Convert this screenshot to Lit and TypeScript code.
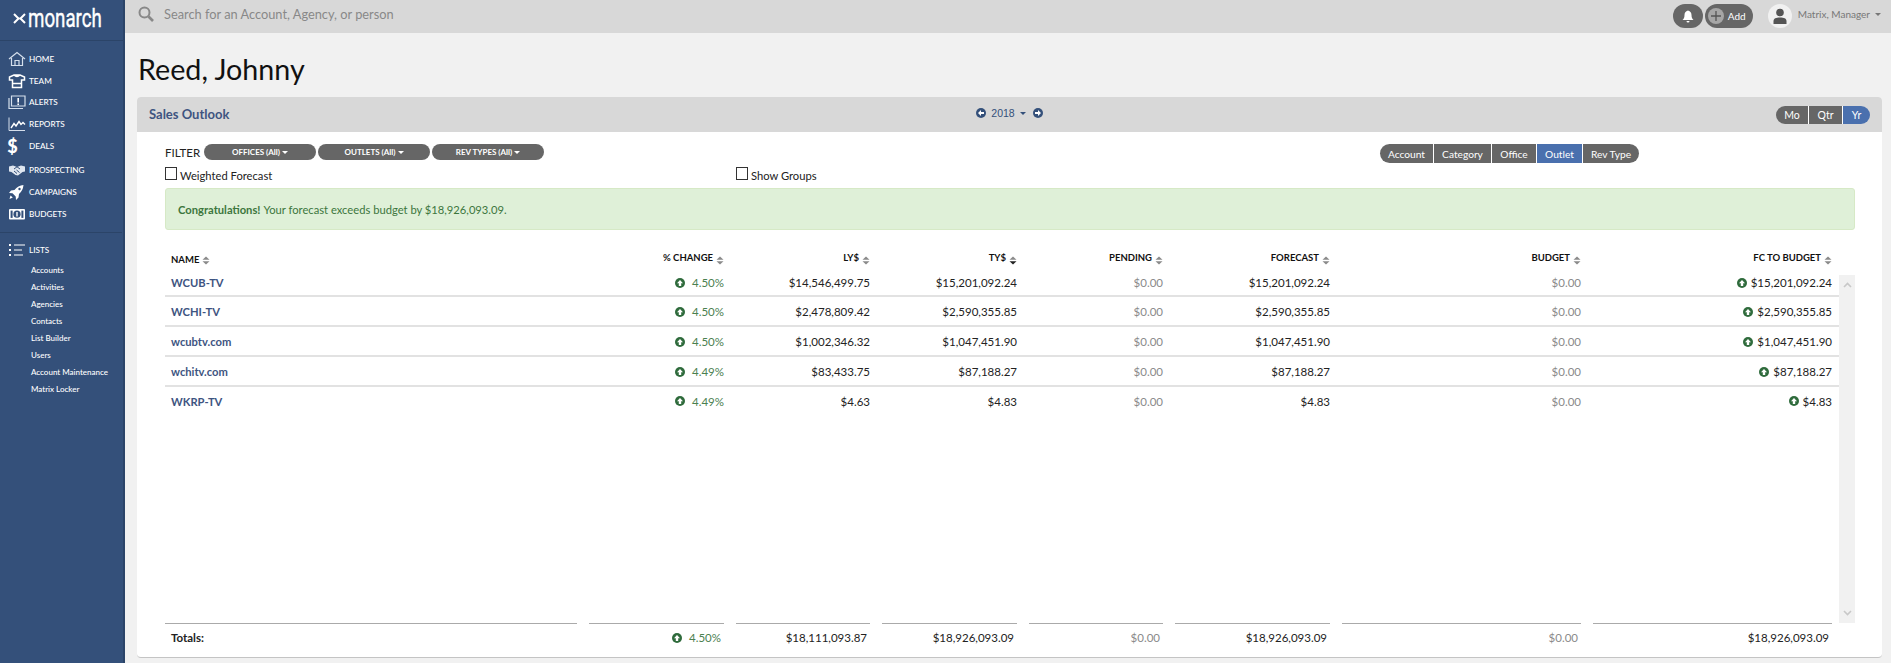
import { LitElement, html, css, svg } from "lit";
import { customElement } from "lit/decorators.js";

const ico = (c: unknown, w = 18, h = 16, vb = "0 0 18 16") =>
  html`<svg class="ico" width=${w} height=${h} viewBox=${vb}>${c}</svg>`;

const icons: Record<string, unknown> = {
  home: ico(svg`<path d="M1 8 L9 1.5 L17 8 M3.5 7 V14.5 H14.5 V7 M7 14.5 V9.5 H11 V14.5" fill="none" stroke="#d5dfec" stroke-width="1.2"/>`),
  team: ico(svg`<path d="M6 2 H12 L16.5 4 V7 H13.5 V14.5 H4.5 V7 H1.5 V4 Z M6 2 Q9 5 12 2 M4.5 10.5 H13.5" fill="none" stroke="#fff" stroke-width="1.5"/>`),
  alerts: ico(svg`<path d="M3.5 2 H17 V12 H3.5 Z" fill="none" stroke="#d5dfec" stroke-width="1.2"/><path d="M1 4 V14.5 H15" fill="none" stroke="#d5dfec" stroke-width="1.2"/><path d="M10.2 4 V8.5 M10.2 9.6 V11" stroke="#fff" stroke-width="1.6"/>`),
  reports: ico(svg`<path d="M1 1.5 V14.5 H17" fill="none" stroke="#d5dfec" stroke-width="1"/><path d="M3 12 L6 7.5 L8 10 L11 5.5 L13 8.5 L15 6.5 L17 8.5" fill="none" stroke="#fff" stroke-width="1.4"/>`),
  prospecting: ico(svg`<path d="M1 4.5 L5 3.5 L9 5 L13 3.5 L17 4.5 V9.5 L14.5 10 L10 13.5 L7.5 13 L3.5 10 L1 9.5 Z" fill="#dfe6f0"/><path d="M6 7 L9 4.8 L12 7 M6 9 L9 11.5 M8.5 8 L11.5 10.5" fill="none" stroke="#34507a" stroke-width="1"/>`),
  campaigns: ico(svg`<path d="M15.5 1 Q10 1.5 6.5 6 L3 6.5 L1 9 L4.5 9.3 L7.7 12.5 L8 16 L10.5 13.5 L11 10 Q15 6.5 15.5 1 Z M2.5 11.5 L4.8 13.6 L1.5 15 Z" fill="#fff"/><circle cx="11.5" cy="5" r="1.2" fill="#34507a"/>`),
  budgets: ico(svg`<rect x="1" y="3" width="16" height="10.5" rx="1" fill="#fff"/><circle cx="9" cy="8.2" r="3.6" fill="#34507a"/><path d="M9 6 V10.5" stroke="#fff" stroke-width="1.4"/><rect x="2.6" y="4.6" width="2" height="7.3" fill="#34507a"/><rect x="13.4" y="4.6" width="2" height="7.3" fill="#34507a"/>`),
  lists: ico(svg`<path d="M1 3 H3 M1 8 H3 M1 13 H3" stroke="#fff" stroke-width="2"/><path d="M6 3 H17 M6 8 H14 M6 13 H15" stroke="#fff" stroke-width="1.1"/>`),
};

const nav = [
  { k: "home", t: "HOME" },
  { k: "team", t: "TEAM" },
  { k: "alerts", t: "ALERTS" },
  { k: "reports", t: "REPORTS" },
  { k: "deals", t: "DEALS", cls: "deals" },
  { k: "prospecting", t: "PROSPECTING" },
  { k: "campaigns", t: "CAMPAIGNS" },
  { k: "budgets", t: "BUDGETS" },
];
const subs = ["Accounts", "Activities", "Agencies", "Contacts", "List Builder", "Users", "Account Maintenance", "Matrix Locker"];

const heads = ["% CHANGE", "LY$", "TY$", "PENDING", "FORECAST", "BUDGET", "FC TO BUDGET"];
const rows = [
  ["WCUB-TV", "4.50%", "$14,546,499.75", "$15,201,092.24", "$15,201,092.24", "$15,201,092.24"],
  ["WCHI-TV", "4.50%", "$2,478,809.42", "$2,590,355.85", "$2,590,355.85", "$2,590,355.85"],
  ["wcubtv.com", "4.50%", "$1,002,346.32", "$1,047,451.90", "$1,047,451.90", "$1,047,451.90"],
  ["wchitv.com", "4.49%", "$83,433.75", "$87,188.27", "$87,188.27", "$87,188.27"],
  ["WKRP-TV", "4.49%", "$4.63", "$4.83", "$4.83", "$4.83"],
];

const up = html`<svg class="up" width="10" height="10" viewBox="0 0 10 10"><circle cx="5" cy="5" r="5" fill="#2f6b3c"/><path d="M5 2 L8 5.2 H6.2 V8 H3.8 V5.2 H2 Z" fill="#fff"/></svg>`;
const sort = (active = false) => html`<svg class="sort" width="8" height="9" viewBox="0 0 8 9"><path d="M4 0.5 L7.5 3.8 H0.5 Z" fill="#8a8a8a"/><path d="M4 8.5 L7.5 5.2 H0.5 Z" fill=${active ? "#222" : "#8a8a8a"}/></svg>`;
const circ = (dir: "l" | "r") => html`<svg width="10" height="10" viewBox="0 0 10 10"><circle cx="5" cy="5" r="5" fill="#34507a"/><path d=${dir === "l" ? "M2 5 L5 2 V4 H8 V6 H5 V8 Z" : "M8 5 L5 2 V4 H2 V6 H5 V8 Z"} fill="#fff"/></svg>`;

@customElement("app-root")
export class AppRoot extends LitElement {
  static styles = css`
    :host { display: flex; height: 663px; overflow: hidden; background: #f1f1f1; font-family: Lato, "Open Sans", sans-serif; color: #222; }
    * { box-sizing: border-box; }
    .side { width: 125px; flex: none; background: #34507a; border-right: 2px solid #2b4468; color: #fff; }
    .logo { height: 41px; border-bottom: 1px solid #2b4468; display: flex; align-items: center; padding: 0 0 4px 13px; gap: 2px; }
    .logo svg { flex: none; }
    .logo-text { display: block; flex: none; width: 73px; font-family: Roboto, sans-serif; font-size: 26px; font-weight: 400; line-height: 1; -webkit-text-stroke: 0.4px #fff; transform: scaleX(0.72); transform-origin: left center; white-space: nowrap; }
    .nav { padding-top: 7px; height: 192px; border-bottom: 1px solid #2b4468; margin-right: 1px; }
    .item { height: 21.7px; display: flex; align-items: center; font-size: 8.2px; font-weight: 500; padding-left: 4px; }
    .item .i { width: 25px; flex: none; display: flex; justify-content: center; }
    .item.deals { margin-bottom: 3px; }
    .dollar { font-size: 18px; font-weight: 900; line-height: 1; margin-left: -8px; }
    .lists { padding-top: 6.5px; }
    .sub { height: 17.1px; display: flex; align-items: center; font-size: 8px; font-weight: 500; padding-left: 31px; }
    .ico { display: block; }
    .main { flex: 1; min-width: 0; display: flex; flex-direction: column; }
    .top { height: 33px; flex: none; background: #d8d8d8; display: flex; align-items: center; padding: 0 0 5px 13px; }
    .search { font-size: 12.8px; color: #888; margin-left: 10px; flex: 1; }
    .pill-bell { width: 30px; height: 24px; border-radius: 12px; background: #666; display: flex; align-items: center; justify-content: center; }
    .pill-add { width: 48px; height: 24px; margin-left: 2px; border-radius: 12px; background: #666; display: flex; align-items: center; gap: 4px; padding-left: 3px; color: #fff; font-size: 10px; }
    .top-right { display: flex; align-items: center; margin-right: 10px; position: relative; top: 2px; }
    .avatar { width: 24px; height: 24px; border-radius: 50%; background: #f1f1f1; margin-left: 15px; display: flex; align-items: center; justify-content: center; overflow: hidden; }
    .user { font-size: 10px; color: #777; margin-left: 6px; display: flex; align-items: center; gap: 5px; position: relative; top: -2px; }
    .caret { display: inline-block; width: 0; height: 0; border-left: 3px solid transparent; border-right: 3px solid transparent; border-top: 3px solid currentColor; vertical-align: middle; }
    h1 { margin: 0; height: 64px; flex: none; padding: 15px 0 0 13px; font-size: 28.7px; font-weight: 400; line-height: 42px; color: #111; }
    .card { margin: 0 9px 0 12px; height: 561px; background: #fff; border-bottom: 1px solid #c4c4c4; border-radius: 4px; display: flex; flex-direction: column; }
    .card-head { height: 35px; flex: none; background: #d8d8d8; border-radius: 4px 4px 0 0; display: grid; grid-template-columns: 1fr auto 1fr; align-items: center; padding: 0 12px; }
    .card-title { font-size: 13px; font-weight: 700; color: #3e5481; position: relative; top: -1px; }
    .year { display: flex; align-items: center; color: #34507a; font-size: 10.5px; font-family: "Liberation Sans", sans-serif; gap: 5px; margin-bottom: 3px; }
    .year .caret { margin-right: 2px; }
    .seg { display: flex; justify-content: flex-end; }
    .seg button { all: unset; box-sizing: border-box; background: #666; color: #fff; display: flex; align-items: center; justify-content: center; border-right: 1px solid #fff; font-family: Lato, sans-serif; }
    .seg button:last-child { border-right: none; border-radius: 0 10px 10px 0; }
    .seg button:first-child { border-radius: 10px 0 0 10px; }
    .seg button.on { background: #4a70ae; }
    .period button { height: 18px; font-size: 10.5px; }
    .seg .p1 { width: 33px; } .seg .p2 { width: 34px; } .seg .p3 { width: 27px; }
    .body { flex: 1; min-height: 0; padding: 12px 27px 0 28px; display: flex; flex-direction: column; }
    .controls { display: flex; justify-content: space-between; height: 20px; }
    .filters { display: flex; align-items: center; height: 16px; }
    .flabel { font-size: 11.5px; color: #222; width: 39px; }
    .fbtn { width: 112px; height: 16px; margin-right: 2px; border-radius: 8px; background: #666; color: #fff; font-size: 8px; font-weight: 700; display: flex; align-items: center; justify-content: center; gap: 2px; }
    .views { margin-right: 216px; }
    .views button { height: 19px; font-size: 10.2px; }
    .seg .v1 { width: 54px; } .seg .v2 { width: 58px; } .seg .v3 { width: 45px; } .seg .v4 { width: 46px; } .seg .v5 { width: 56px; }
    .checks { display: flex; height: 24px; padding-top: 3px; }
    .chk { display: flex; align-items: flex-start; font-size: 11.2px; line-height: 18px; color: #222; width: 571px; gap: 3px; }
    .chk i { width: 12px; height: 13px; border: 1px solid #333; flex: none; }
    .alert { height: 42px; flex: none; background: #dff0d8; border: 1px solid #d6e9c6; border-radius: 3px; color: #3c763d; font-size: 11.2px; display: flex; align-items: center; padding-left: 12px; }
    .alert b { margin-right: 3px; }
    .grid { display: grid; grid-template-columns: 412px 135px 134px 135px 134px 155px 239px 239px; column-gap: 12px; }
    .thead { height: 45px; align-items: end; padding-bottom: 10px; flex: none; }
    .th { font-size: 9.5px; font-weight: 700; color: #111; display: flex; justify-content: flex-end; align-items: flex-end; gap: 3px; line-height: 14px; }
    .th.name { justify-content: flex-start; padding-left: 6px; }
    .th.name span { position: relative; top: 2px; }
    .sort { display: block; }
    .scroll-wrap { flex: 1; min-height: 0; display: flex; }
    .tbody { flex: 1; min-width: 0; }
    .row { height: 30px; border-bottom: 2px solid #e2e2e2; align-items: center; padding-top: 1px; font-size: 11.5px; color: #222; }
    .row:first-child { height: 22px; padding: 0 0 5px; }
    .row:last-child { border-bottom: none; padding-bottom: 3px; }
    .name-cell { font-weight: 700; color: #3e5481; padding-left: 6px; font-size: 11.2px; }
    .num { display: flex; justify-content: flex-end; align-items: center; gap: 4px; }
    .muted { color: #8a8a8a; }
    .green { color: #4a8050; }
    .bar { width: 16px; flex: none; background: #f1f1f1; display: flex; flex-direction: column; justify-content: space-between; align-items: center; padding: 7px 0; }
    .tfoot { height: 34px; flex: none; }
    .tf { border-top: 1px solid #aaa; height: 28px; font-size: 11.5px; display: flex; align-items: center; padding: 0 3px; justify-content: flex-end; gap: 4px; }
    .tf.total { justify-content: flex-start; font-weight: 700; padding-left: 6px; }
  `;

  render() {
    return html`
      <aside class="side">
        <div class="logo">
          <svg width="13" height="11" viewBox="0 0 13 11"><path d="M1 1 L5.5 5.5 L1 10 M12 1 L7.5 5.5 L12 10" fill="none" stroke="#fff" stroke-width="2"/><path d="M5 5.5 H8" stroke="#fff" stroke-width="1.6"/></svg>
          <span class="logo-text">monarch</span>
        </div>
        <nav class="nav">
          ${nav.map(
            (n) => html`<div class="item ${n.cls ?? ""}">
              <span class="i">${n.k === "deals" ? html`<span class="dollar">$</span>` : icons[n.k]}</span>${n.t}
            </div>`
          )}
        </nav>
        <div class="lists">
          <div class="item"><span class="i">${icons.lists}</span>LISTS</div>
          ${subs.map((s) => html`<div class="sub">${s}</div>`)}
        </div>
      </aside>
      <div class="main">
        <header class="top">
          <svg width="16" height="16" viewBox="0 0 16 16"><circle cx="6.5" cy="6.5" r="5" fill="none" stroke="#888" stroke-width="2"/><path d="M10.5 10.5 L15 15" stroke="#888" stroke-width="2.6"/></svg>
          <span class="search">Search for an Account, Agency, or person</span>
          <div class="top-right">
            <div class="pill-bell"><svg width="12" height="13" viewBox="0 0 12 13"><path d="M6 0.5 C8.5 1 9.5 3 9.5 5 C9.5 8 10.5 9 11.5 10 H0.5 C1.5 9 2.5 8 2.5 5 C2.5 3 3.5 1 6 0.5 Z M4.5 11 H7.5 A1.5 1.5 0 0 1 4.5 11 Z" fill="#fff"/></svg></div>
            <div class="pill-add"><svg width="16" height="16" viewBox="0 0 16 16"><circle cx="8" cy="8" r="8" fill="#a6a6a6"/><path d="M8 3 V13 M3 8 H13" stroke="#555" stroke-width="1.3"/></svg>Add</div>
            <div class="avatar"><svg width="14" height="16" viewBox="0 0 14 16"><circle cx="7" cy="4.5" r="3.8" fill="#555"/><path d="M0.5 16 V13 C0.5 10.5 3 9.5 7 9.5 C11 9.5 13.5 10.5 13.5 13 V16 Z" fill="#555"/></svg></div>
            <span class="user">Matrix, Manager <i class="caret"></i></span>
          </div>
        </header>
        <h1>Reed, Johnny</h1>
        <section class="card">
          <div class="card-head">
            <span class="card-title">Sales Outlook</span>
            <span class="year">${circ("l")} <span>2018</span><i class="caret"></i>${circ("r")}</span>
            <div class="seg period">
              <button class="p1">Mo</button><button class="p2">Qtr</button><button class="p3 on">Yr</button>
            </div>
          </div>
          <div class="body">
            <div class="controls">
              <div class="filters">
                <span class="flabel">FILTER</span>
                <div class="fbtn">OFFICES (All) <i class="caret"></i></div>
                <div class="fbtn">OUTLETS (All) <i class="caret"></i></div>
                <div class="fbtn">REV TYPES (All) <i class="caret"></i></div>
              </div>
              <div class="seg views">
                <button class="v1">Account</button><button class="v2">Category</button><button class="v3">Office</button><button class="v4 on">Outlet</button><button class="v5">Rev Type</button>
              </div>
            </div>
            <div class="checks">
              <label class="chk"><i></i>Weighted Forecast</label>
              <label class="chk"><i></i>Show Groups</label>
            </div>
            <div class="alert"><b>Congratulations!</b> Your forecast exceeds budget by $18,926,093.09.</div>
            <div class="grid thead">
              <div class="th name"><span>NAME</span>${sort()}</div>
              ${heads.map((h) => html`<div class="th"><span>${h}</span>${sort(h === "TY$")}</div>`)}
            </div>
            <div class="scroll-wrap">
              <div class="tbody">
                ${rows.map(
                  (r) => html`<div class="grid row">
                    <div class="name-cell">${r[0]}</div>
                    <div class="num green">${up}&nbsp;${r[1]}</div>
                    <div class="num">${r[2]}</div>
                    <div class="num">${r[3]}</div>
                    <div class="num muted">$0.00</div>
                    <div class="num">${r[4]}</div>
                    <div class="num muted">$0.00</div>
                    <div class="num">${up}${r[5]}</div>
                  </div>`
                )}
              </div>
              <div class="bar">
                <svg width="9" height="6" viewBox="0 0 9 6"><path d="M1 5 L4.5 1.5 L8 5" fill="none" stroke="#c8c8c8" stroke-width="1.6"/></svg>
                <svg width="9" height="6" viewBox="0 0 9 6"><path d="M1 1 L4.5 4.5 L8 1" fill="none" stroke="#c8c8c8" stroke-width="1.6"/></svg>
              </div>
            </div>
            <div class="grid tfoot">
              <div class="tf total">Totals:</div>
              <div class="tf green">${up}&nbsp;4.50%</div>
              <div class="tf">$18,111,093.87</div>
              <div class="tf">$18,926,093.09</div>
              <div class="tf muted">$0.00</div>
              <div class="tf">$18,926,093.09</div>
              <div class="tf muted">$0.00</div>
              <div class="tf">$18,926,093.09</div>
            </div>
          </div>
        </section>
      </div>
    `;
  }
}
